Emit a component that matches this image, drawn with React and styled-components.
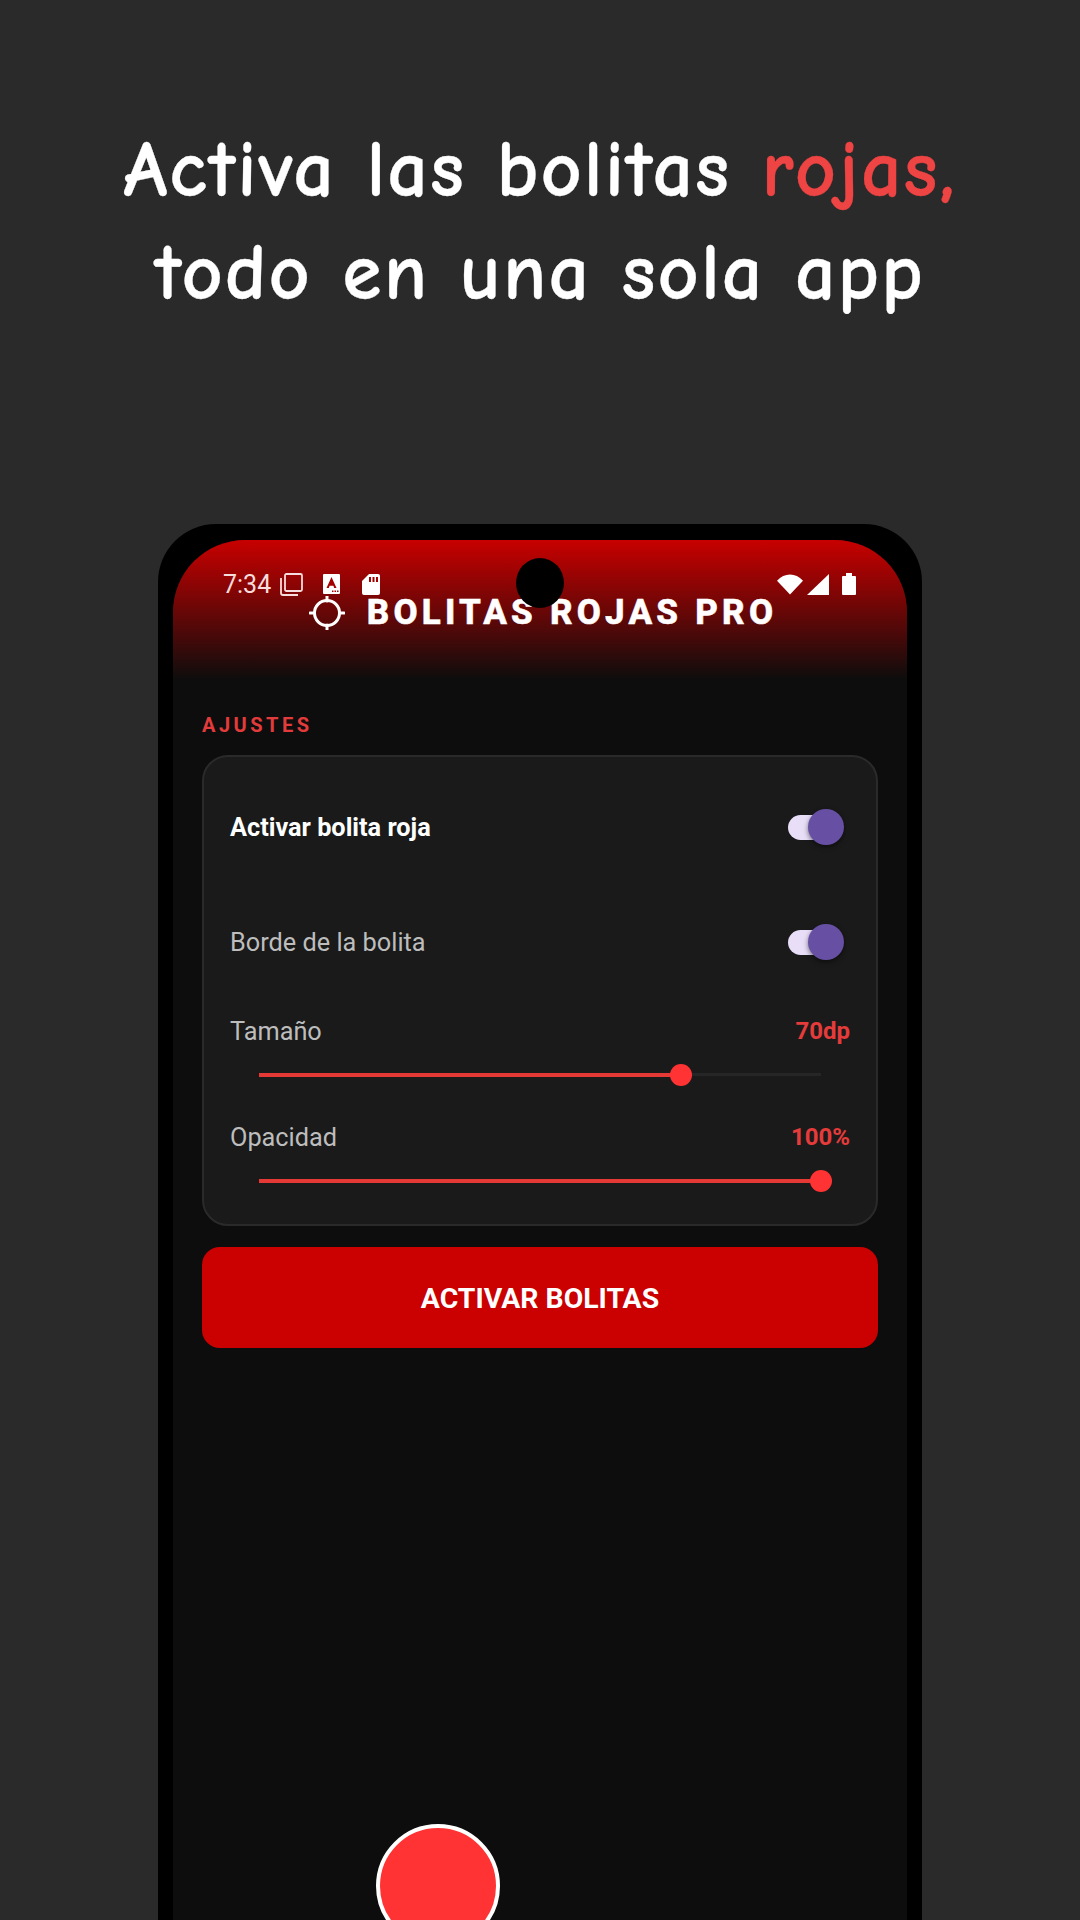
import styled, { createGlobalStyle } from "styled-components";

const GlobalStyle = createGlobalStyle`
  html, body {
    margin: 0;
    padding: 0;
    background: #2a2a2a;
  }
`;

const Page = styled.div`
  position: relative;
  width: 1080px;
  height: 1920px;
  overflow: hidden;
  background: #2a2a2a;
  font-family: Roboto, "Liberation Sans", sans-serif;
`;

const Headline = styled.h1`
  margin: 0;
  padding-top: 119px;
  height: 524px;
  box-sizing: border-box;
  text-align: center;
  color: #fff;
  font-family: "Comic Sans MS", "Comic Neue", "Open Sans", sans-serif;
  font-size: 80px;
  line-height: 103px;
  font-weight: 700;
  letter-spacing: 2px;
  -webkit-text-stroke: 0.3px currentColor;
`;

const Red = styled.span`
  color: #ef4444;
`;

const Frame = styled.div`
  width: 764px;
  height: 1396px;
  margin: 0 auto;
  box-sizing: border-box;
  padding: 16px 15px 0;
  background: #000;
  border-radius: 58px 58px 0 0;
`;

const Screen = styled.div`
  position: relative;
  height: 100%;
  background: #0d0d0d;
  border-radius: 72px 72px 0 0;
  overflow: hidden;
`;

const Header = styled.div`
  height: 140px;
  box-sizing: border-box;
  padding: 56px 0 0 6px;
  display: flex;
  justify-content: center;
  align-items: center;
  align-content: flex-start;
  flex-wrap: wrap;
  gap: 22px;
  background: linear-gradient(180deg, #c80000 0%, #0d0d0d 100%);
`;

const Title = styled.div`
  color: #fff;
  font-size: 35px;
  line-height: 34px;
  font-weight: 800;
  letter-spacing: 4.2px;
  -webkit-text-stroke: 0.5px #fff;
`;

const StatusBar = styled.div`
  position: absolute;
  top: 32px;
  left: 50px;
  right: 51px;
  display: flex;
  align-items: center;
  height: 24px;
  color: #f6dcdc;
  font-size: 25px;
`;

const StatusTime = styled.span`
  margin-right: 9px;
`;

const StatusIcon = styled.svg`
  display: block;
  flex: none;
  margin-right: ${(props) => props.$gap || 0}px;
`;

const StatusRight = styled.div`
  margin-left: auto;
  display: flex;
  align-items: center;
  gap: 3px;
`;

const Camera = styled.div`
  position: absolute;
  top: 18px;
  left: 343px;
  width: 48px;
  height: 50px;
  border-radius: 50%;
  background: #000;
`;

const Content = styled.div`
  padding: 0 29px;
`;

const SectionLabel = styled.div`
  margin-top: 34px;
  height: 22px;
  line-height: 22px;
  color: #e23b3b;
  font-size: 20px;
  font-weight: 700;
  letter-spacing: 3.5px;
`;

const Card = styled.div`
  margin-top: 19px;
  box-sizing: border-box;
  height: 471px;
  padding: 42px 26px 0 26px;
  background: #1a1a1a;
  border: 2px solid #2a2a2a;
  border-radius: 26px;
`;

const ToggleRow = styled.div`
  height: 56px;
  margin-top: ${(props) => props.$top || 0}px;
  padding-right: 6px;
  display: flex;
  align-items: center;
  justify-content: space-between;
`;

const RowLabel = styled.span`
  font-size: 25.3px;
  color: ${(props) => (props.$strong ? "#fff" : "#bdbdbd")};
  font-weight: ${(props) => (props.$strong ? 700 : 400)};
`;

const Toggle = styled.div`
  position: relative;
  width: 56px;
  height: 36px;
`;

const ToggleTrack = styled.div`
  position: absolute;
  top: 6px;
  left: 0;
  width: 44px;
  height: 25px;
  border-radius: 13px;
  background: #e8def8;
`;

const ToggleThumb = styled.div`
  position: absolute;
  top: 0;
  right: 0;
  width: 36px;
  height: 36px;
  border-radius: 50%;
  background: #6750a4;
  box-shadow: 0 2px 5px rgba(0, 0, 0, 0.5);
`;

const ValueRow = styled.div`
  height: 30px;
  margin-top: ${(props) => props.$top}px;
  display: flex;
  align-items: center;
  justify-content: space-between;
`;

const Value = styled.span`
  color: #e53b3b;
  font-size: 24px;
  font-weight: 700;
`;

const Slider = styled.div`
  position: relative;
  height: 30px;
  margin: 13px 29px 0;
  display: flex;
  align-items: center;
`;

const SliderRail = styled.div`
  width: 100%;
  height: 3px;
  background: #262626;
`;

const SliderFill = styled.div`
  height: 4px;
  background: #e53935;
`;

const SliderThumb = styled.div`
  position: absolute;
  top: 5px;
  width: 22px;
  height: 22px;
  margin-left: -11px;
  border-radius: 50%;
  background: #ff3333;
`;

const ActionButton = styled.div`
  margin-top: 21px;
  height: 101px;
  box-sizing: border-box;
  padding-top: 2px;
  display: flex;
  align-items: center;
  justify-content: center;
  border-radius: 18px;
  background: #cb0000;
  color: #fff;
  font-size: 28.4px;
  font-weight: 700;
`;

const Bubble = styled.div`
  position: absolute;
  top: 1824px;
  left: 376px;
  width: 124px;
  height: 124px;
  box-sizing: border-box;
  border: 4px solid #fff;
  border-radius: 50%;
  background: #ff3333;
`;

const RangeSlider = ({ percent }) => (
  <Slider>
    <SliderRail>
      <SliderFill style={{ width: `${percent}%` }} />
    </SliderRail>
    <SliderThumb style={{ left: `${percent}%` }} />
  </Slider>
);

const Switch = () => (
  <Toggle>
    <ToggleTrack />
    <ToggleThumb />
  </Toggle>
);

const TargetIcon = () => (
  <svg width="36" height="34" viewBox="0 0 36 34" fill="none" stroke="#fff" strokeWidth="3" style={{ display: "block" }}>
    <circle cx="18" cy="17" r="12.5" />
    <path d="M18 0v5M18 29v5M1 17h4M31 17h4" strokeLinecap="round" />
  </svg>
);

const StatusIcons = () => (
  <>
    <StatusTime>7:34</StatusTime>
    <StatusIcon $gap={20} width="23" height="23" viewBox="0 0 23 23" fill="none" stroke="#f6dcdc" strokeWidth="1.8">
      <rect x="5" y="1" width="17" height="17" rx="1.5" />
      <path d="M1 5v15a2 2 0 0 0 2 2h15" />
    </StatusIcon>
    <StatusIcon $gap={22} width="17" height="20" viewBox="0 0 17 20">
      <path d="M1 0h15a1 1 0 0 1 1 1v18a1 1 0 0 1-1 1H1a1 1 0 0 1-1-1V1a1 1 0 0 1 1-1z" fill="#fff" />
      <path d="M3.500 14 8.500 3l5 11h-2.300l-.8-2.200H6.600L5.800 14z" fill="#a50000" />
      <path d="M9 16.500h1.500V18H9zM11.500 16.500H13V18h-1.500zM14 16.500h1.500V18H14z" fill="#a50000" />
    </StatusIcon>
    <StatusIcon width="18" height="21" viewBox="0 0 18 21">
      <path d="M7 0h9a2 2 0 0 1 2 2v17a2 2 0 0 1-2 2H2a2 2 0 0 1-2-2V7z" fill="#fff" />
      <path d="M7 3h2v5H7zM10.500 3h2v5h-2zM14 3h2v5h-2z" fill="#a50000" />
    </StatusIcon>
    <StatusRight>
      <svg width="26" height="21" viewBox="0 0 27 21"><path d="M13.500 21 0 6.500Q6 0 13.500 0T27 6.500z" fill="#fff" /></svg>
      <svg width="24" height="21" viewBox="0 0 24 21"><path d="M23 0v21H1z" fill="#fff" /></svg>
      <svg width="14" height="22" viewBox="0 0 14 22" style={{ marginLeft: 9 }}><path d="M4 0h6v3h3a1 1 0 0 1 1 1v17a1 1 0 0 1-1 1H1a1 1 0 0 1-1-1V4a1 1 0 0 1 1-1h3z" fill="#fff" /></svg>
    </StatusRight>
  </>
);

const App = () => (
  <Page>
    <GlobalStyle />
    <Headline>
      Activa las bolitas <Red>rojas,</Red>
      <br />
      todo en una sola app
    </Headline>
    <Frame>
      <Screen>
        <Header>
          <TargetIcon />
          <Title>BOLITAS ROJAS PRO</Title>
        </Header>
        <StatusBar>
          <StatusIcons />
        </StatusBar>
        <Camera />
        <Content>
          <SectionLabel>AJUSTES</SectionLabel>
          <Card>
            <ToggleRow>
              <RowLabel $strong>Activar bolita roja</RowLabel>
              <Switch />
            </ToggleRow>
            <ToggleRow $top={59}>
              <RowLabel>Borde de la bolita</RowLabel>
              <Switch />
            </ToggleRow>
            <ValueRow $top={46}>
              <RowLabel>Tamaño</RowLabel>
              <Value>70dp</Value>
            </ValueRow>
            <RangeSlider percent={75} />
            <ValueRow $top={33}>
              <RowLabel>Opacidad</RowLabel>
              <Value>100%</Value>
            </ValueRow>
            <RangeSlider percent={100} />
          </Card>
          <ActionButton>ACTIVAR BOLITAS</ActionButton>
        </Content>
      </Screen>
    </Frame>
    <Bubble />
  </Page>
);

export default App;
